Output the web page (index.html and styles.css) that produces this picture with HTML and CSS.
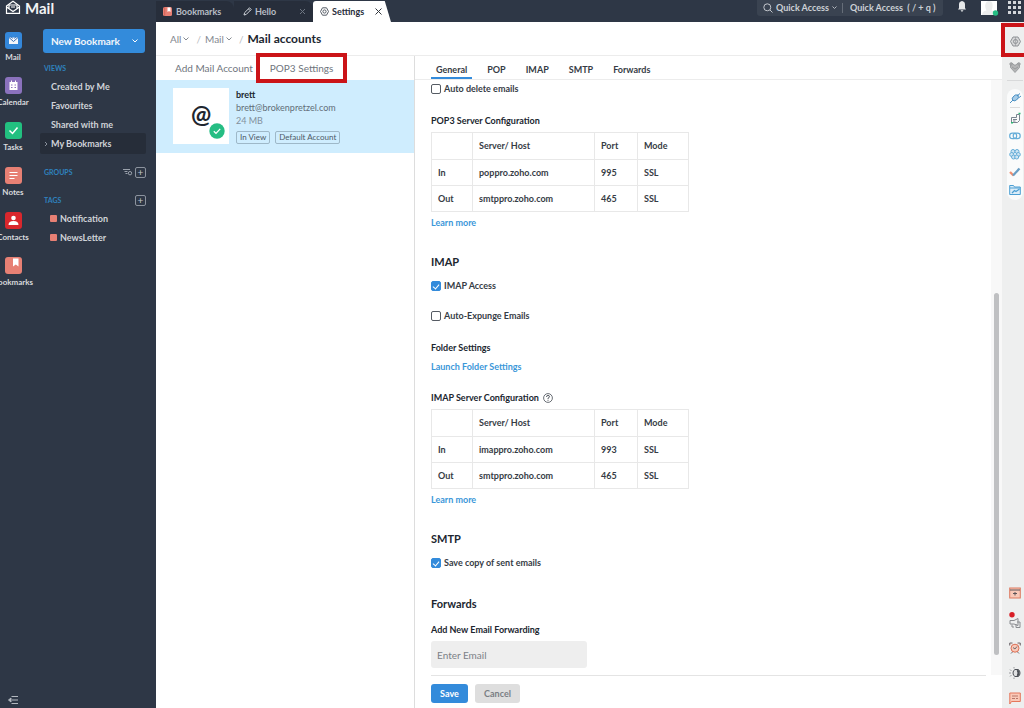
FILE: index.html
```html
<!DOCTYPE html>
<html lang="en">
<head>
<meta charset="utf-8">
<title>Mail - Settings</title>
<link rel="stylesheet" href="styles.css">
</head>
<body>
<div class="app">
  <aside class="side">
    <div class="brand">
      <svg width="16" height="16" viewBox="0 0 16 16" fill="none" stroke="#fff" stroke-width="1.2"><path d="M1.5 6 8 1.200l6.500 4.800v7.300H1.500z"/><path d="M1.500 7 8 11.500 14.500 7M4 8.500V5h8v3.500M6 7h4"/></svg>
      <span>Mail</span>
    </div>
    <div class="side-body">
      <nav class="apps">
        <a href="#" class="app-link"><svg width="17" height="17" viewBox="0 0 17 17"><rect width="17" height="17" rx="3" fill="#3487da"/><path d="M4 5.500h9v6.500H4z" fill="#f4f6fb"/><path d="m4 5.500 4.500 4 4.500-4M6 4.500l1.500 2M11 4.500l-1.500 2" fill="none" stroke="#3a70b4"/></svg>Mail</a>
        <a href="#" class="app-link"><svg width="17" height="17" viewBox="0 0 17 17"><rect width="17" height="17" rx="3" fill="#8b72bd"/><path d="M4.500 5h8v8h-8zM6 3.500h1V5H6zM10 3.500h1V5h-1z" fill="#fff"/><path d="M6 8h1.500M9.500 8H11M6 10.500h1.500M9.500 10.500H11" stroke="#8b72bd"/></svg>Calendar</a>
        <a href="#" class="app-link"><svg width="17" height="17" viewBox="0 0 17 17"><rect width="17" height="17" rx="3" fill="#22c080"/><path d="m4.500 8.500 3 3 5-6" fill="none" stroke="#fff" stroke-width="1.500"/></svg>Tasks</a>
        <a href="#" class="app-link"><svg width="17" height="17" viewBox="0 0 17 17"><rect width="17" height="17" rx="3" fill="#e78074"/><path d="M4.500 5.500h8M4.500 8.500h8M4.500 11.500h5" stroke="#fff" stroke-width="1.200"/></svg>Notes</a>
        <a href="#" class="app-link"><svg width="17" height="17" viewBox="0 0 17 17"><rect width="17" height="17" rx="3" fill="#d9272d"/><circle cx="8.500" cy="6" r="2.300" fill="#fff"/><path d="M3.500 13q0-4 5-4t5 4z" fill="#fff"/></svg>Contacts</a>
        <a href="#" class="app-link"><svg width="17" height="17" viewBox="0 0 17 17"><rect width="17" height="17" rx="3" fill="#e78074"/><path d="M8 1.500h5.500v8l-2.700-2-2.800 2z" fill="#fff"/></svg>Bookmarks</a>
      </nav>
      <div class="menu">
        <button class="new-btn" type="button"><span>New Bookmark</span><svg width="6" height="4" viewBox="0 0 6 4" fill="none" stroke="#fff"><path d="m.5.5 2.500 2.500L5.500.5"/></svg></button>
        <h2 class="menu-title">VIEWS</h2>
        <a href="#" class="menu-item">Created by Me</a>
        <a href="#" class="menu-item">Favourites</a>
        <a href="#" class="menu-item">Shared with me</a>
        <a href="#" class="menu-item current">
          <svg width="4" height="6" viewBox="0 0 4 6" fill="none" stroke="#8a919c"><path d="m1 1 2 2-2 2"/></svg>My Bookmarks</a>
        <div class="menu-head"><h2 class="menu-title">GROUPS</h2>
          <svg width="10" height="8" viewBox="0 0 10 8" fill="none" stroke="#9aa1ac"><path d="M0 1.500h7M1.500 3.500h3M2.500 5.500h2"/><circle cx="7" cy="5.200" r="1.700"/></svg>
          <button class="plus" type="button" aria-label="Add group">+</button></div>
        <div class="menu-head tags"><h2 class="menu-title">TAGS</h2><button class="plus" type="button" aria-label="Add tag">+</button></div>
        <a href="#" class="menu-item tag"><i class="swatch"></i>Notification</a>
        <a href="#" class="menu-item tag"><i class="swatch"></i>NewsLetter</a>
      </div>
    </div>
    <button class="collapse" type="button" aria-label="Collapse sidebar"><svg width="10" height="8" viewBox="0 0 10 8" fill="none" stroke="#b3b8bf"><path d="M3.500.5H10M4 4h6M3.500 7.500H10"/><path d="M3 2v4L.5 4z" fill="#b3b8bf"/></svg></button>
  </aside>

  <div class="main">
    <header class="top">
      <nav class="tabs">
        <a href="#" class="tab tab-first"><svg width="9" height="9" viewBox="0 0 9 9"><rect width="9" height="9" rx="1.500" fill="#e78074"/><path d="M4.500.500h3v4.500L6 4 4.500 5z" fill="#fff"/><path d="M1.700 0v9" stroke="#c8574d" stroke-width=".7"/></svg>Bookmarks</a>
        <a href="#" class="tab tab-hello"><svg width="9" height="9" viewBox="0 0 9 9" fill="none" stroke="#cfd3d9"><path d="m1 8 .6-2.300L6.500.8l1.700 1.700-4.900 4.900zM5.500 2l1.500 1.500"/></svg>Hello<svg class="x" width="7" height="7" viewBox="0 0 7 7" stroke="#6f7783"><path d="m1 1 5 5M6 1 1 6"/></svg></a>
        <a href="#" class="tab active"><svg width="9" height="9" viewBox="0 0 9 9" fill="none" stroke="#555c66"><path d="M2.500.800h4l2 3.700-2 3.700h-4l-2-3.700z"/><circle cx="4.500" cy="4.500" r="1.600"/></svg>Settings<svg class="x" width="7" height="7" viewBox="0 0 7 7" stroke="#30353c"><path d="m.5.5 6 6M6.500.5l-6 6"/></svg></a>
      </nav>
      <div class="search">
        <svg width="10" height="10" viewBox="0 0 10 10" fill="none" stroke="#c3c7cd"><circle cx="4.300" cy="4.300" r="3.500"/><path d="m7 7 2.500 2.500"/></svg>
        <button type="button" class="scope">Quick Access<svg width="5" height="4" viewBox="0 0 5 4" fill="none" stroke="#b3b8bf"><path d="m.5.5 2 2 2-2"/></svg></button>
        <input type="text" class="query" aria-label="Search" placeholder="Quick Access  ( / + q )">
      </div>
      <svg width="8" height="11" viewBox="0 0 8 11" fill="#e6e8ea"><path d="M4 0q3 .5 3 3.500V7l1 1.500H0L1 7V3.500Q1 .5 4 0zM2.500 9.300h3L4 11z"/></svg>
      <svg class="avatar" width="18" height="16" viewBox="0 0 18 16"><path d="M0 0h16v14H0z" fill="#fff"/><path d="M1 14q0-4 4.500-4.500Q3.500 6 4.500 3T8 0q3 0 3.500 3t-1 6.500Q15 10 15 14z" fill="#eceded"/><circle cx="14.500" cy="12" r="2.700" fill="#25bd83"/></svg>
      <svg width="13" height="13" viewBox="0 0 13 13" fill="#d4d7db"><path d="M0 0h3v3H0zM5 0h3v3H5zM10 0h3v3h-3zM0 5h3v3H0zM5 5h3v3H5zM10 5h3v3h-3zM0 10h3v3H0zM5 10h3v3H5zM10 10h3v3h-3z"/></svg>
    </header>

    <div class="under">
      <div class="work">
        <nav class="crumbs">
          <a href="#">All<svg width="6" height="4" viewBox="0 0 6 4" fill="none" stroke="#858a90"><path d="m.5.5 2.500 2.500L5.500.5"/></svg></a><span>/</span>
          <a href="#">Mail<svg width="6" height="4" viewBox="0 0 6 4" fill="none" stroke="#858a90"><path d="m.5.5 2.500 2.500L5.500.5"/></svg></a><span>/</span>
          <h1>Mail accounts</h1>
        </nav>
        <div class="panes">
          <section class="accounts">
            <div class="actions"><a href="#">Add Mail Account</a><a href="#" class="pop3">POP3 Settings</a></div>
            <div class="account">
              <div class="at"><span>@</span><svg class="ok" width="16" height="16" viewBox="0 0 16 16"><circle cx="8" cy="8" r="7.700" fill="#25bd83"/><path d="m4.800 8.200 2.200 2.200 4.200-4.500" fill="none" stroke="#fff" stroke-width="1.300"/></svg></div>
              <div class="who">
                <strong>brett</strong><span class="mail">brett@brokenpretzel.com</span><span class="size">24 MB</span>
                <div class="chips"><span>In View</span><span>Default Account</span></div>
              </div>
            </div>
          </section>

          <section class="detail">
            <nav class="subtabs"><a href="#" class="on">General</a><a href="#">POP</a><a href="#">IMAP</a><a href="#">SMTP</a><a href="#">Forwards</a></nav>
            <div class="scroller">
              <form class="settings">
                <label class="check"><input type="checkbox">Auto delete emails</label>
                <h3 class="gap-l">POP3 Server Configuration</h3>
                <table>
                  <tr><th class="c-dir"></th><th class="c-host">Server/ Host</th><th class="c-port">Port</th><th>Mode</th></tr>
                  <tr><td>In</td><td>poppro.zoho.com</td><td>995</td><td>SSL</td></tr>
                  <tr><td>Out</td><td>smtppro.zoho.com</td><td>465</td><td>SSL</td></tr>
                </table>
                <a href="#" class="link">Learn more</a>
                <h2>IMAP</h2>
                <label class="check"><input type="checkbox" checked>IMAP Access</label>
                <label class="check gap-l"><input type="checkbox">Auto-Expunge Emails</label>
                <h3 class="gap-l">Folder Settings</h3>
                <a href="#" class="link">Launch Folder Settings</a>
                <h3 class="gap-m">IMAP Server Configuration <svg width="10" height="10" viewBox="0 0 10 10" fill="none" stroke="#454b54"><circle cx="5" cy="5" r="4.400" stroke-width=".8"/><path d="M3.500 4q0-1.600 1.500-1.600T6.500 3.800Q6.500 4.500 5 5.200V6M5 6.800v1" stroke-width=".9"/></svg></h3>
                <table>
                  <tr><th class="c-dir"></th><th class="c-host">Server/ Host</th><th class="c-port">Port</th><th>Mode</th></tr>
                  <tr><td>In</td><td>imappro.zoho.com</td><td>993</td><td>SSL</td></tr>
                  <tr><td>Out</td><td>smtppro.zoho.com</td><td>465</td><td>SSL</td></tr>
                </table>
                <a href="#" class="link">Learn more</a>
                <h2>SMTP</h2>
                <label class="check"><input type="checkbox" checked>Save copy of sent emails</label>
                <h2 class="last">Forwards</h2>
                <h3><label for="fwd">Add New Email Forwarding</label></h3>
                <input id="fwd" class="field" type="email" placeholder="Enter Email">
              </form>
              <div class="track"><div class="thumb"></div></div>
            </div>
            <div class="footer"><button type="button" class="save">Save</button><button type="button" class="cancel">Cancel</button></div>
          </section>
        </div>
      </div>

      <aside class="tools">
        <div class="gear"><svg width="11" height="11" viewBox="0 0 11 11" fill="#d5d6d7" stroke="#8f9296"><path d="M3 1h5l2.500 4.500L8 10H3L.5 5.500z"/><circle cx="5.500" cy="5.500" r="2"/><path d="M5.500 1v9" stroke-width=".6"/></svg></div>
        <svg class="heart" width="12" height="11" viewBox="0 0 12 11" fill="#b4b5b6" stroke="#909396" stroke-width=".8"><path d="M6 10.500 1.500 5.500V2L3 .8 5 3h2L9 .8 10.500 2v3.500z"/><circle cx="2" cy="2" r="1.200"/><circle cx="10" cy="2" r="1.200"/><path d="m3 5 3 2 3-2"/></svg>
        <hr class="rule">
        <div class="pill">
          <svg width="12" height="11" viewBox="0 0 12 11" fill="#a8cde8" stroke="#4b91c4"><path d="M1 10l3-3M4 4q2-3 5-2 1.500 3-1.500 5L5 8 3 6zM8 3l3-2.500M9.500 5 12 3"/></svg>
          <hr>
          <svg width="11" height="12" viewBox="0 0 11 12" fill="none" stroke="#7a8590"><path d="M1.500 5.500h5V2.500h3v6l-2 2h-6z"/><path d="M3 7.500h4M3 9h2.500"/><path d="M8.500 1.500h2M1 10.800h2" stroke="#2bb673" stroke-width="1.500"/></svg>
          <svg width="12" height="12" viewBox="0 0 12 12" fill="none" stroke="#65add8" stroke-width="1.200"><rect x=".7" y="3.200" width="7" height="5.500" rx="2.700"/><rect x="4.200" y="3.200" width="7" height="5.500" rx="2.700"/></svg>
          <svg width="12" height="12" viewBox="0 0 12 12" fill="#cfe5f3" stroke="#65add8"><circle cx="4" cy="3.500" r="2"/><circle cx="8" cy="3.500" r="2"/><circle cx="2.700" cy="6.500" r="2"/><circle cx="9.300" cy="6.500" r="2"/><circle cx="4.500" cy="9" r="2"/><circle cx="7.700" cy="9" r="2"/></svg>
          <svg width="12" height="12" viewBox="0 0 12 12" fill="none" stroke-width="2.300"><path d="m1 6 3.500 3.500" stroke="#ef8e70"/><path d="m4 9.500 6.500-7" stroke="#6a9ec4"/></svg>
          <svg width="12" height="12" viewBox="0 0 12 12" fill="#dcedf8" stroke="#4c9fd3"><path d="M.7 10.500v-9H4.500l1 1.500h5.800v7.500zM1 4h10"/><path d="m3 9 2.500-2.500L7 7.500 10.500 5" stroke-width="1.300"/></svg>
        </div>
        <div class="lower">
          <svg width="12" height="12" viewBox="0 0 12 12" fill="#f9c9b8" stroke="#dc7b61"><rect x=".7" y="1" width="10.600" height="10"/><path d="M1 3h10M4 6.500h4M6 5v3.500" stroke="#5d5558"/></svg>
          <svg width="12" height="17" viewBox="0 0 12 17" fill="none" stroke="#8a8c90"><circle cx="3" cy="2.700" r="2.700" fill="#d81e26" stroke="none"/><path d="M1 8.500h4l4-2v7l-4-1.500H1zM3 12.500V15h2M8 10h3v5.500H7V12"/></svg>
          <svg width="12" height="12" viewBox="0 0 12 12" fill="#f9c9b8" stroke="#6e6c72"><path d="M.7 3.500V1h2.800M8.500 1h2.800v2.500M2 11.500l1.500-1.500M10 11.500 8.500 10"/><circle cx="6" cy="6.200" r="4" stroke="#dc6f55"/><path d="m4 5.500 2 1.500 2-2.500"/></svg>
          <svg width="12" height="12" viewBox="0 0 12 12" fill="#e0e1e2" stroke="#4d5157"><path d="M6 2.500h3Q11 3 11 6T9 9.500H6q-2-.8-2-3.500t2-3.500z" /><path d="M8.500 3q2 3 0 6" stroke-width="2"/><path d="M0 6h2M1 2.500 2.500 4M1 9.500 2.500 8M5 0v1.500M5 10.500V12" stroke="#989a9d"/></svg>
          <svg width="12" height="12" viewBox="0 0 12 12" fill="#f9c9b8" stroke="#e5775c"><path d="M.8 12V1h10.500v8.500H2.500z"/><path d="M3 4h6M3 6.500h3M7 6.500h2" stroke="#b87769"/></svg>
        </div>
      </aside>
    </div>
  </div>
</div>
</body>
</html>
```
FILE: styles.css
```css
* { box-sizing: border-box; }
body { margin: 0; font: 10px/14px Lato, "Open Sans", sans-serif; color: #20262f; background: #fff; }
a { color: inherit; text-decoration: none; }
button, input { font: inherit; color: inherit; border: 0; padding: 0; margin: 0; background: none; }
h1, h2, h3 { margin: 0; font-weight: 700; }
svg { flex: none; }

.app { display: flex; height: 100vh; overflow: hidden; background: #2e3746; }

/* left navigation */
.side { width: 156px; flex: none; display: flex; flex-direction: column; color: #d0d3d8; }
.brand { height: 29px; display: flex; align-items: flex-start; gap: 4px; padding-left: 5px; color: #f2f3f4; font: 700 15px/16px Lato, sans-serif; }
.side-body { flex: 1; display: flex; }
.apps { width: 26px; flex: none; display: flex; flex-direction: column; gap: 14px; padding-top: 3px; }
.app-link { display: flex; flex-direction: column; align-items: center; gap: 3px; font: 700 8px/11px Lato, sans-serif; white-space: nowrap; color: #d8dadd; }
.menu { flex: 1; padding-right: 10px; padding-left: 14px; }
.new-btn { width: 102px; height: 24px; margin-left: 3px; padding: 0 7px 0 8px; display: flex; align-items: center; justify-content: space-between; border-radius: 3px; background: #338bdb; color: #f2f6fa; font-weight: 700; }
.menu-title { padding-left: 4px; font: 700 7px/12px Lato, sans-serif; color: #2f82be; }
.new-btn + .menu-title { margin: 9px 0 3px; }
.menu-item { display: flex; align-items: center; height: 19px; padding-left: 11px; font-size: 9px; font-weight: 700; }
.menu-item.current { height: 21px; margin-top: -1px; padding-left: 4px; gap: 3px; border-radius: 2px; background: #262d39; }
.menu-head { display: flex; align-items: center; gap: 2px; height: 12px; margin-top: 12px; }
.menu-head .menu-title { flex: 1; }
.menu-head.tags { margin: 16px 0 3px; }
.plus { width: 11px; height: 11px; border: 1px solid #8c939e; border-radius: 2px; font: 10px/8px Lato, sans-serif; color: #c2c6cc; }
.menu-item.tag { gap: 3px; padding-left: 10px; }
.swatch { width: 7px; height: 7px; border-radius: 1px; background: #e78074; }
.collapse { align-self: flex-start; height: 16px; padding-left: 8px; display: flex; align-items: center; }

/* top bar */
.main { flex: 1; min-width: 0; display: flex; flex-direction: column; }
.top { height: 22px; flex: none; display: flex; align-items: flex-start; padding: 1px 3px 0 0; gap: 15px; color: #cdd1d6; }
.tabs { flex: 1; display: flex; align-items: stretch; height: 21px; }
.tab { display: flex; align-items: center; gap: 4px; padding: 0 7px; background: #272e3b; font: 700 9px/14px Lato, sans-serif; color: #b9bec6; }
.tab-first { width: 78px; border-radius: 0 8px 0 0; }
.tab-hello { width: 79px; padding-left: 9px; gap: 3px; border-radius: 0 8px 0 0; }
.tab .x { margin-left: auto; }
.tab.active { width: 78px; padding-right: 9px; gap: 3px; color: #272e3b; background: #fff; border-radius: 3px 0 0 0; clip-path: polygon(0 0, 92% 0, 100% 100%, 0 100%); }
.search { width: 186px; height: 16px; margin-top: -1px; padding: 0 2px 0 6px; display: flex; align-items: center; gap: 3px; border-radius: 0 0 3px 3px; background: #3a4351; font-weight: 700; white-space: nowrap; }
.scope { display: flex; align-items: center; gap: 3px; padding-right: 5px; border-right: 1px solid #656d78; font-size: 9px; line-height: 10px; }
.query { flex: 1; min-width: 0; padding-left: 4px; font-size: 9px; }
.query::placeholder { color: #cdd1d6; opacity: 1; }
.avatar { margin-right: -6px; }

/* workspace */
.under { flex: 1; min-height: 0; display: flex; background: #fff; }
.work { flex: 1; min-width: 0; display: flex; flex-direction: column; }
.crumbs { height: 34px; flex: none; display: flex; align-items: center; gap: 4px; padding-left: 14px; border-bottom: 1px solid #ececec; color: #83888f; }
.crumbs a { display: flex; align-items: center; gap: 2px; }
.crumbs span { padding-left: 3px; color: #b8bbbf; }
.crumbs h1 { font-size: 12px; line-height: 16px; color: #20262f; }
.panes { flex: 1; min-height: 0; display: flex; }
.accounts { width: 259px; flex: none; border-right: 1px solid #ddd; }
.actions { height: 24px; display: flex; align-items: center; padding-left: 19px; color: #6f757d; }
.actions a { white-space: nowrap; }
.actions .pop3 { margin-left: 7px; padding: 4px 10px; outline: 4px solid #cb1418; z-index: 1; }
.account { display: flex; gap: 7px; height: 73px; padding: 8px 17px; background: #cfedfe; }
.at { position: relative; width: 56px; height: 56px; flex: none; display: flex; align-items: center; justify-content: center; padding-bottom: 4px; background: #fff; font-size: 24px; font-weight: 700; }
.ok { position: absolute; right: 4px; bottom: 5px; }
.who { display: flex; flex-direction: column; line-height: 13px; font-size: 9px; }
.who .mail { color: #626d78; }
.who .size { color: #82909c; }
.chips { display: flex; gap: 5px; margin-top: 4px; }
.chips span { padding: 0 3px; border: 1px solid #9eb8c8; border-radius: 2px; font-size: 8px; line-height: 11px; white-space: nowrap; color: #4e5a66; }

.detail { flex: 1; min-width: 0; display: flex; flex-direction: column; }
.subtabs { height: 24px; flex: none; display: flex; gap: 20px; padding-left: 16px; border-bottom: 1px solid #ececec; font-size: 9px; font-weight: 700; line-height: 28px; color: #363c45; }
.subtabs .on { padding: 0 5px; margin-right: -5px; border-bottom: 2px solid #338bdb; }
.scroller { flex: 1; min-height: 0; display: flex; overflow: hidden; }
.settings { flex: 1; min-width: 0; padding: 3px 0 0 16px; }
.check { display: flex; align-items: center; gap: 3px; height: 12px; font-size: 9px; font-weight: 700; color: #363c45; }
.check input { appearance: none; width: 10px; height: 10px; border: 1px solid #555b63; border-radius: 2px; background: #fff; }
.check input:checked { display: grid; border-color: #338bdb; background: #338bdb; }
.check input:checked::after { content: ""; width: 3px; height: 5px; place-self: center; border: solid #fff; border-width: 0 1px 1px 0; transform: rotate(40deg); }
.settings h3 { height: 18px; font-size: 9px; line-height: 14px; }
.settings h3 svg { margin-left: 2px; vertical-align: -2px; }
.settings h2 { margin: 24px 0 10px; font-size: 11px; line-height: 16px; }
.settings h2.last { margin: 27px 0 11px; }
.settings .gap-l { margin-top: 18px; }
.settings h3.gap-l { margin-top: 19px; }
.settings .gap-m { margin-top: 17px; }
.link { display: block; width: max-content; margin-top: 4px; font-size: 9px; font-weight: 700; color: #3b97d9; }
h3 + .link { margin-top: 1px; }
table { width: 258px; table-layout: fixed; border-collapse: collapse; }
th, td { height: 26px; padding: 0 6px; border: 1px solid #e8e8e8; text-align: left; font: 700 9px/14px Lato, sans-serif; color: #363c45; }
th { height: 27px; }
.c-dir { width: 41px; }
.c-host { width: 122px; }
.c-port { width: 43px; }
.field { display: block; width: 156px; height: 27px; padding: 0 6px; border-radius: 3px; background: #eee; font-size: 10px; }
.field::placeholder { color: #7c8187; opacity: 1; }
.track { width: 11px; padding-top: 213px; background: #f8f8f8; }
.thumb { width: 5px; height: 362px; margin-left: 3px; border-radius: 3px; background: #bfc0c2; }
.footer { flex: none; display: flex; gap: 7px; height: 33px; margin: 0 16px; padding-top: 8px; border-top: 1px solid #e4e4e4; }
.footer button { height: 19px; border-radius: 3px; font-size: 9px; font-weight: 700; }
.save { width: 37px; background: #338bdb; color: #fff; }
.cancel { width: 45px; background: #dedede; color: #7a7e84; }

/* right tool rail */
.tools { width: 22px; flex: none; display: flex; flex-direction: column; align-items: center; padding: 1px 0 4px 4px; background: #eeefef; }
.gear { width: 28px; height: 34px; flex: none; margin: 0 0 5px; padding-top: 3px; display: flex; align-items: center; justify-content: center; outline: 4px solid #cb1418; outline-offset: -4px; z-index: 1; }
.rule { width: 16px; margin: 7px 0 0; border: 0; border-top: 1px solid #d8d9da; }
.pill { display: flex; flex-direction: column; align-items: center; gap: 6px; margin-top: 8px; padding: 4px 2px; border-radius: 8px; background: #fafbfb; }
.pill hr { width: 10px; margin: -3px 0 -2px; border: 0; border-top: 1px solid #ddd; }
.lower { margin-top: auto; display: flex; flex-direction: column; gap: 13px; }
```
